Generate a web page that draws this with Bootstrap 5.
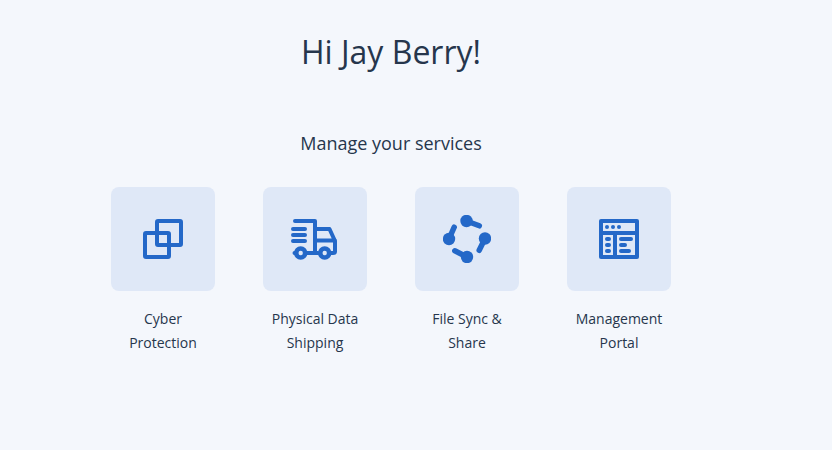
<!DOCTYPE html>
<html lang="en">
<head>
  <meta charset="UTF-8" />
  <meta name="viewport" content="width=device-width,initial-scale=1" />
  <title>Manage your services</title>
  <link href="https://cdn.jsdelivr.net/npm/bootstrap@5.3.0/dist/css/bootstrap.min.css" rel="stylesheet" />
  <style>
    body {
      background: #f4f7fc;
      color: #26364c;
      font-family: "Open Sans", sans-serif;
      min-height: 100vh;
    }
    .page-wrap {
      width: 782px;
      padding-top: 28px;
    }
    .hello-title {
      font-size: 32px;
      line-height: 48px;
      font-weight: 400;
      margin-bottom: 55px;
    }
    .services-title {
      font-size: 18px;
      line-height: 24px;
      font-weight: 400;
      margin-bottom: 32px;
    }
    .service-row {
      gap: 48px;
    }
    .service-item {
      width: 104px;
      color: inherit;
      text-decoration: none;
    }
    .service-tile {
      width: 104px;
      height: 104px;
      background: #dfe8f7;
      border-radius: 8px;
      margin-bottom: 16px;
    }
    .service-name {
      font-size: 14px;
      line-height: 24px;
    }
    .ico-line {
      fill: none;
      stroke: #2468c8;
      stroke-width: 4;
      stroke-linecap: round;
      stroke-linejoin: round;
    }
    .ico-thick {
      stroke-width: 5.5;
    }
    .ico-wheel {
      stroke-width: 4.6;
    }
    .ico-fill {
      fill: #2468c8;
    }
    .ico-pane {
      fill: #dfe8f7;
    }
  </style>
</head>
<body>
  <div class="page-wrap text-center">
    <h1 class="hello-title">Hi Jay Berry!</h1>
    <h2 class="services-title">Manage your services</h2>
    <div class="service-row d-flex justify-content-center">
      <a class="service-item" href="#">
        <div class="service-tile d-flex align-items-center justify-content-center">
          <svg width="48" height="48" viewBox="0 0 48 48">
            <rect class="ico-line" x="6" y="18" width="24" height="24" rx="1" />
            <rect class="ico-line" x="18" y="6" width="24" height="24" rx="1" />
          </svg>
        </div>
        <div class="service-name">Cyber Protection</div>
      </a>
      <a class="service-item" href="#">
        <div class="service-tile d-flex align-items-center justify-content-center">
          <svg width="48" height="48" viewBox="0 0 48 48">
            <path class="ico-line" d="M4 6H24V38M24 14H38.500L44 26V36.500Q44 38 42 38H40M24 25.500H44M16 38H27M3.500 38H5" />
            <path class="ico-line" d="M2 14H14M2 20H14M2 26H14" />
            <circle class="ico-line ico-wheel" cx="9.700" cy="38" r="4.500" />
            <circle class="ico-line ico-wheel" cx="33.700" cy="38" r="4.500" />
          </svg>
        </div>
        <div class="service-name">Physical Data Shipping</div>
      </a>
      <a class="service-item" href="#">
        <div class="service-tile d-flex align-items-center justify-content-center">
          <svg width="48" height="48" viewBox="0 0 48 48">
            <path class="ico-line ico-thick" d="M23.500 6L36.300 10.800M42 23.500L36.200 35.300M24 42L11.800 35.800M6 24L11.200 12.200" />
            <circle class="ico-fill" cx="23.500" cy="6" r="6.200" />
            <circle class="ico-fill" cx="42" cy="23.500" r="6.200" />
            <circle class="ico-fill" cx="24" cy="42" r="6.200" />
            <circle class="ico-fill" cx="6" cy="24" r="6.200" />
          </svg>
        </div>
        <div class="service-name">File Sync &amp; Share</div>
      </a>
      <a class="service-item" href="#">
        <div class="service-tile d-flex align-items-center justify-content-center">
          <svg width="48" height="48" viewBox="0 0 48 48">
            <rect class="ico-fill" x="4" y="4" width="40" height="40" rx="2" />
            <rect class="ico-pane" x="8" y="8" width="32" height="8" />
            <rect class="ico-pane" x="8" y="20" width="10" height="20" />
            <rect class="ico-pane" x="22" y="20" width="18" height="20" />
            <circle class="ico-fill" cx="12" cy="12" r="2" />
            <circle class="ico-fill" cx="18" cy="12" r="2" />
            <circle class="ico-fill" cx="24" cy="12" r="2" />
            <rect class="ico-fill" x="10" y="22" width="6" height="4" rx="2" />
            <rect class="ico-fill" x="10" y="28" width="6" height="4" rx="2" />
            <rect class="ico-fill" x="10" y="34" width="6" height="4" rx="2" />
            <rect class="ico-fill" x="24" y="22" width="14" height="4" rx="2" />
            <rect class="ico-fill" x="24" y="28" width="8" height="4" rx="2" />
            <rect class="ico-fill" x="24" y="34" width="12" height="4" rx="2" />
          </svg>
        </div>
        <div class="service-name">Management Portal</div>
      </a>
    </div>
  </div>
  <script src="https://cdn.jsdelivr.net/npm/bootstrap@5.3.0/dist/js/bootstrap.bundle.min.js"></script>
</body>
</html>
